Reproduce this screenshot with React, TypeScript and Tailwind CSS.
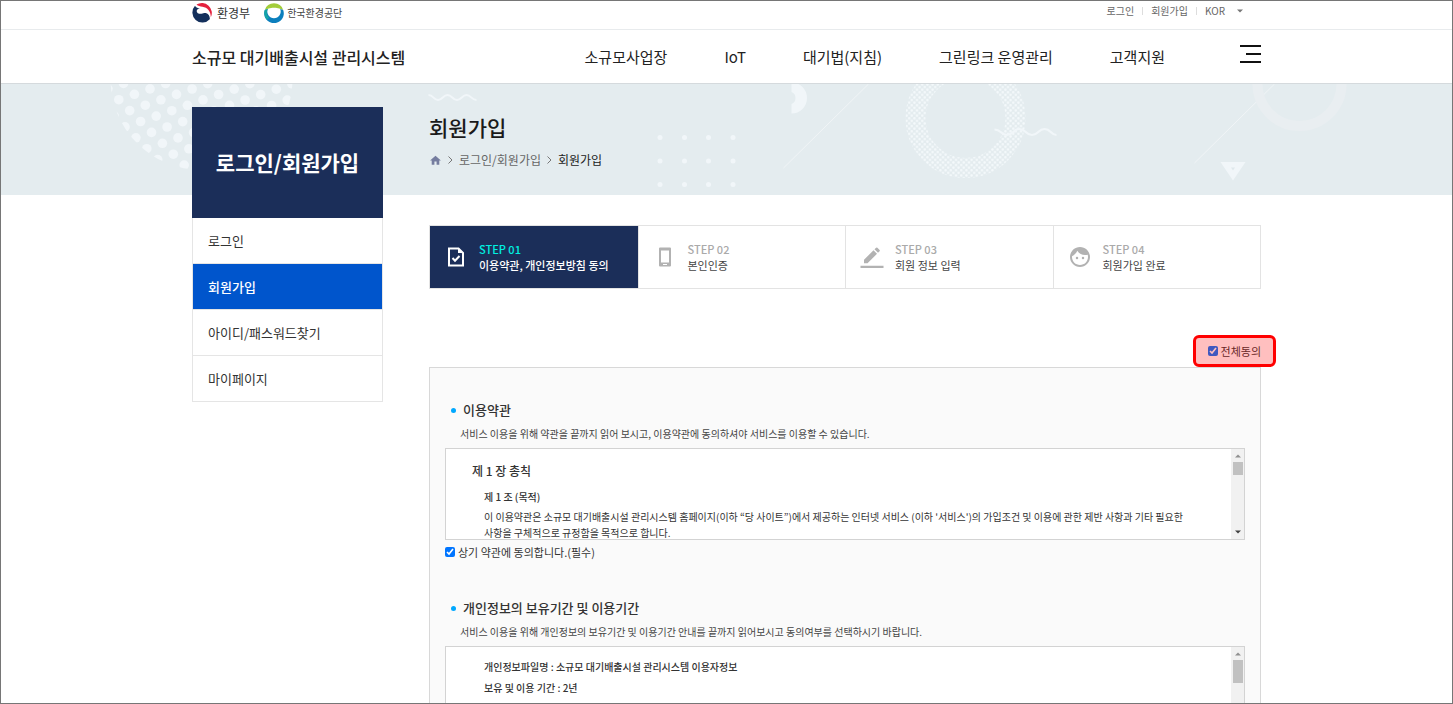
import { useState } from "react";
import type { ReactNode } from "react";
import { MdFace, MdHome } from "react-icons/md";

const NAV = ["소규모사업장", "IoT", "대기법(지침)", "그린링크 운영관리", "고객지원"];

const SIDE_MENU = ["로그인", "회원가입", "아이디/패스워드찾기", "마이페이지"];

// big dots sit on a skewed grid and are clipped to a disc
const BIG_DOTS = Array.from({ length: 13 }, (_, i) => i - 3).flatMap((i) =>
  Array.from({ length: 17 }, (_, j) => j - 8).map((j) => ({
    x: 118.3 + i * 15.6 + j * 10.9,
    y: 99.7 - i * 5.4 + j * 10.9,
  })),
);

function BannerArt() {
  return (
    <svg width="1453" height="111" viewBox="0 84 1453 111" fill="none" aria-hidden="true"
      className="absolute top-0 left-1/2 max-w-none -translate-x-1/2">
      <defs>
        <clipPath id="disc"><circle cx="201" cy="79" r="91" /></clipPath>
        <pattern id="fine" width="5.2" height="5.2" patternUnits="userSpaceOnUse">
          <circle cx="1.3" cy="1.3" r="1.2" fill="#f4f9fb" />
          <circle cx="3.9" cy="3.9" r="1.2" fill="#f4f9fb" />
        </pattern>
      </defs>
      <g clipPath="url(#disc)" fill="#f1f6f9">
        {BIG_DOTS.map((d) => <circle key={`${d.x}-${d.y}`} cx={d.x} cy={d.y} r="4.8" />)}
      </g>
      <path d="M428 95c5 0 5 5 9.500 5s5-5 9.500-5 5 5 9.500 5 5-5 9.500-5 5 5 10 5" stroke="#f1f6f9" strokeWidth="2" />
      <g fill="#f1f6f9">
        {[137.500, 161, 184.500].map((y) =>
          [659.500, 684, 708, 732.500].map((x) => <circle key={`${x}-${y}`} cx={x} cy={y} r="2.500" />),
        )}
      </g>
      <path d="M791 82.500a15.500 15.500 0 0 1 0 31v-9.500a6.500 6.500 0 0 0 0-12z" fill="#f1f6f9" />
      <path d="M783 168L868 84M1194 163l80-79" stroke="#f0f4f6" strokeWidth="1" />
      <circle cx="965" cy="118" r="50" stroke="url(#fine)" strokeWidth="20" />
      <path d="M994 129.500c7 0 6 5.500 12.500 5.500s6-6 12.500-6 6 6 12.500 6 6-6 12.500-6 6 6 12 6" stroke="#f1f6f9" strokeWidth="2.200" />
      <circle cx="1299" cy="84" r="42" stroke="#e9eef1" strokeWidth="10" />
      <path d="M1220 162h25l-12.500 18.500z" fill="#f1f6f9" />
      <path d="M1230.500 167.500h4l-2 3z" fill="#dfe8ec" />
    </svg>
  );
}

function MinistryLogo() {
  return (
    <svg width="20" height="20" viewBox="0 0 20 20" aria-hidden="true">
      <path d="M4.500 1.600A10 10 0 0 1 18.800 14.500C19 8.500 15.500 4.600 10.500 3.800 8 3.400 6 3.200 4.500 1.600z" fill="#e4213d" />
      <path d="M3 2.800A10 10 0 1 0 17.800 16.300c.3-3-1.300-5.500-4-6.300-1.500-.4-2.600.5-4.300.7C6.500 11 4.200 9.500 4.800 7.500c.4-1.400 2-1.900 3.700-1.900C6 5.300 4 4.700 3 2.800z" fill="#14305c" />
    </svg>
  );
}

function KecoLogo() {
  return (
    <svg width="20" height="20" viewBox="0 0 20 20" aria-hidden="true">
      <path d="M.8 7A9.700 9.700 0 0 1 19.200 7C16 6 14.500 4.800 10 4.800S4 6 .8 7z" fill="#a3cd3a" />
      <path d="M.8 7a9.800 9.800 0 1 0 18.400 0c-1-.2-2-.6-3-1A6.700 6.700 0 1 1 3.800 6c-1 .5-2 .8-3 1z" fill="#0c7fbd" />
      <path d="M.8 7A9.800 9.800 0 0 0 3 16.800L5.200 14.700A6.700 6.700 0 0 1 3.800 6c-1 .5-2 .8-3 1z" fill="#14a5a5" />
    </svg>
  );
}

function FileIcon() {
  return (
    <svg width="24" height="24" viewBox="0 0 24 24" fill="none" stroke="#fff" strokeWidth="2" aria-hidden="true">
      <path d="M5 3.500h9.500L19 8v12.500H5z" />
      <path d="M14 3.500V8h5z" fill="#fff" stroke="none" />
      <path d="M8.500 13l2.500 2.700 4.500-4.700" />
    </svg>
  );
}

function PhoneIcon() {
  return (
    <svg width="24" height="24" viewBox="0 0 24 24" fill="#b2b2b2" aria-hidden="true">
      <path fillRule="evenodd" d="M7 2.500h10a1 1 0 0 1 1 1v17a1 1 0 0 1-1 1H7a1 1 0 0 1-1-1v-17a1 1 0 0 1 1-1zM8 5.500v12h8v-12zM10 19v1h4v-1z" />
    </svg>
  );
}

function PencilIcon() {
  return (
    <svg width="24" height="24" viewBox="0 0 24 24" fill="#b2b2b2" aria-hidden="true">
      <path d="M4 14.800L13.500 5.300l3.500 3.500L7.500 18.300H4zM14.500 4.300l1.600-1.600a1 1 0 0 1 1.300 0l2.200 2.200a1 1 0 0 1 0 1.300L18 7.800zM.5 20.700h23V23H.5z" />
    </svg>
  );
}

const STEPS: { no: string; label: string; icon: ReactNode }[] = [
  { no: "STEP 01", label: "이용약관, 개인정보방침 동의", icon: <FileIcon /> },
  { no: "STEP 02", label: "본인인증", icon: <PhoneIcon /> },
  { no: "STEP 03", label: "회원 정보 입력", icon: <PencilIcon /> },
  { no: "STEP 04", label: "회원가입 완료", icon: <MdFace size={24} color="#b2b2b2" /> },
];

function ScrollRail({ tall }: { tall?: boolean }) {
  return (
    <div className="flex w-[13px] shrink-0 flex-col items-center justify-between bg-[#f1f1f1] py-1" aria-hidden="true">
      <div className="flex flex-col items-center gap-1">
        <svg width="6" height="5" viewBox="0 0 6 5"><path d="M0 4.500l3-3 3 3z" fill="#8f8f8f" /></svg>
        <div className={`w-[10px] bg-[#c1c1c1] ${tall ? "h-[23px]" : "h-[13px]"}`} />
      </div>
      <svg width="6" height="5" viewBox="0 0 6 5"><path d="M0 .5h6l-3 3z" fill="#404040" /></svg>
    </div>
  );
}

interface TermsProps {
  title: string;
  desc: string;
  tall?: boolean;
  agree?: ReactNode;
  children: ReactNode;
}

function Terms({ title, desc, tall, agree, children }: TermsProps) {
  return (
    <section>
      <h3 className="flex items-center gap-[7px] pl-[6px] text-[13px] leading-5 font-medium text-[#333]">
        <span className="size-[5px] rounded-full bg-[#00a8ff]" />
        {title}
      </h3>
      <p className="pl-[15px] text-[10px] leading-7 text-[#444]">{desc}</p>
      <div className="flex h-[92px] overflow-hidden border border-[#d3d3d3] bg-white">
        <div className="min-w-0 flex-1 overflow-hidden pr-6 pl-[26px] text-[10px] leading-4 break-keep text-[#333]">
          {children}
        </div>
        <ScrollRail tall={tall} />
      </div>
      {agree}
    </section>
  );
}

export default function App() {
  const [agreed, setAgreed] = useState(true);

  return (
    <div className="h-screen overflow-hidden border border-[#767676] bg-white font-['Noto_Sans_CJK_KR',sans-serif] text-[#333]">
      <header>
        <div className="border-b border-[#e8ebed]">
          <div className="mx-auto flex h-7 max-w-[1069px] items-start justify-between">
            <div className="flex items-center gap-[14px] pt-[2px]">
              <a href="#me" className="flex items-center gap-[5px] text-[12px] leading-5"><MinistryLogo />환경부</a>
              <a href="#keco" className="flex items-center gap-[3px] text-[10px] leading-5 text-[#444]"><KecoLogo />한국환경공단</a>
            </div>
            <div className="flex items-center text-[10px] leading-5 text-[#666]">
              <a href="#login">로그인</a>
              <span className="mx-2 h-2 w-px bg-[#ddd]" />
              <a href="#join">회원가입</a>
              <span className="mx-2 h-2 w-px bg-[#ddd]" />
              <button type="button" className="flex items-center gap-3 pr-[18px]">
                KOR
                <svg width="6" height="4" viewBox="0 0 6 4"><path d="M0 .5h6l-3 3z" fill="#777" /></svg>
              </button>
            </div>
          </div>
        </div>
        <div className="border-b border-[#d5dadd]">
          <div className="mx-auto flex h-[53px] max-w-[1069px] items-center justify-between">
            <a href="#home" className="text-[16px] leading-6 font-medium text-[#222]">소규모 대기배출시설 관리시스템</a>
            <div className="flex items-center">
              <nav className="flex gap-[57px] text-[15px] leading-6 text-[#222]">
                {NAV.map((item) => <a key={item} href="#menu">{item}</a>)}
              </nav>
              <button type="button" aria-label="전체메뉴" className="mb-[6px] ml-[74px]">
                <svg width="22" height="20" viewBox="0 0 22 20" fill="#111">
                  <path d="M1 1h21v2H1zM7 9h15v2H7zM1 17h21v2H1z" />
                </svg>
              </button>
            </div>
          </div>
        </div>
      </header>

      <div className="relative">
        <div className="absolute inset-x-0 top-0 h-[111px] overflow-hidden bg-[#e4ecef]">
          <BannerArt />
        </div>

        <div className="relative mx-auto flex max-w-[1069px] items-start gap-[46px] pt-[23px]">
          <aside className="w-[191px] shrink-0">
            <h2 className="flex h-[111px] items-center justify-center bg-[#1b2e59] text-[21px] font-bold text-white">
              로그인/회원가입
            </h2>
            <ul className="border-x border-[#e5e5e5] text-[13px]">
              {SIDE_MENU.map((item) => (
                <li key={item}>
                  <a href="#side"
                    className={`flex h-[46px] items-center border-b border-[#e5e5e5] pl-[15px] ${item === "회원가입" ? "bg-[#0055cc] font-medium text-white" : "text-[#333]"}`}>
                    {item}
                  </a>
                </li>
              ))}
            </ul>
          </aside>

          <main className="min-w-0 flex-1">
            <h1 className="text-[21px] leading-10 font-medium text-[#1a1a1a]">회원가입</h1>
            <nav className="flex items-center gap-[6px] text-[12px] leading-[26px] text-[#666]">
              <MdHome size={13} color="#757d9f" />
              <svg width="5" height="8" viewBox="0 0 5 8" fill="none" stroke="#777"><path d="M.5.5L4 4 .5 7.500" /></svg>
              <a href="#login">로그인/회원가입</a>
              <svg width="5" height="8" viewBox="0 0 5 8" fill="none" stroke="#777"><path d="M.5.5L4 4 .5 7.500" /></svg>
              <a href="#join" className="text-[#222]">회원가입</a>
            </nav>

            <ol className="mt-[52px] grid h-16 grid-cols-4 border border-[#e3e3e3]">
              {STEPS.map((step, i) => (
                <li key={step.no}
                  className={`flex items-center gap-[11px] pl-[14px] ${i === 0 ? "bg-[#1b2e59]" : "border-l border-[#e3e3e3]"}`}>
                  <span className="shrink-0">{step.icon}</span>
                  <div className="text-[11px] leading-4">
                    <p className={`font-medium ${i === 0 ? "text-[#00f0e0]" : "text-[#aaa]"}`}>{step.no}</p>
                    <p className={i === 0 ? "font-medium text-white" : "text-[#444]"}>{step.label}</p>
                  </div>
                </li>
              ))}
            </ol>

            <div className="mt-[50px] mb-1 flex justify-end">
              <label className="relative flex items-center gap-[3px] text-[11px] leading-6">
                <input type="checkbox" checked={agreed} onChange={(e) => setAgreed(e.target.checked)} className="size-[10px]" />
                전체동의
                <span className="pointer-events-none absolute -inset-x-[15px] -inset-y-1 rounded-md border-3 border-[#ff0000] bg-[#ff0000]/25" />
              </label>
            </div>

            <div className="flex flex-col gap-[34px] border border-[#d8d8d8] bg-[#fafafa] px-[15px] pt-8">
              <Terms
                title="이용약관"
                desc="서비스 이용을 위해 약관을 끝까지 읽어 보시고, 이용약관에 동의하셔야 서비스를 이용할 수 있습니다."
                agree={
                  <label className="flex w-fit items-center gap-[3px] text-[11px] leading-6 text-[#333]">
                    <input type="checkbox" checked={agreed} onChange={(e) => setAgreed(e.target.checked)} className="size-[10px]" />
                    상기 약관에 동의합니다.(필수)
                  </label>
                }
              >
                <h4 className="pt-3 text-[12px] leading-5 font-medium">제 1 장 총칙</h4>
                <h5 className="pt-1 pl-3 leading-6 font-medium">제 1 조 (목적)</h5>
                <p className="pl-3">
                  이 이용약관은 소규모 대기배출시설 관리시스템 홈페이지(이하 “당 사이트”)에서 제공하는 인터넷 서비스 (이하 '서비스')의 가입조건 및 이용에 관한 제반 사항과 기타 필요한 사항을 구체적으로 규정함을 목적으로 합니다.
                </p>
              </Terms>
              <Terms
                title="개인정보의 보유기간 및 이용기간"
                desc="서비스 이용을 위해 개인정보의 보유기간 및 이용기간 안내를 끝까지 읽어보시고 동의여부를 선택하시기 바랍니다."
                tall
              >
                <div className="flex flex-col gap-px pt-[10px] pl-3 leading-5 font-medium">
                  <p>개인정보파일명 : 소규모 대기배출시설 관리시스템 이용자정보</p>
                  <p>보유 및 이용 기간 : 2년</p>
                </div>
              </Terms>
            </div>
          </main>
        </div>
      </div>
    </div>
  );
}
